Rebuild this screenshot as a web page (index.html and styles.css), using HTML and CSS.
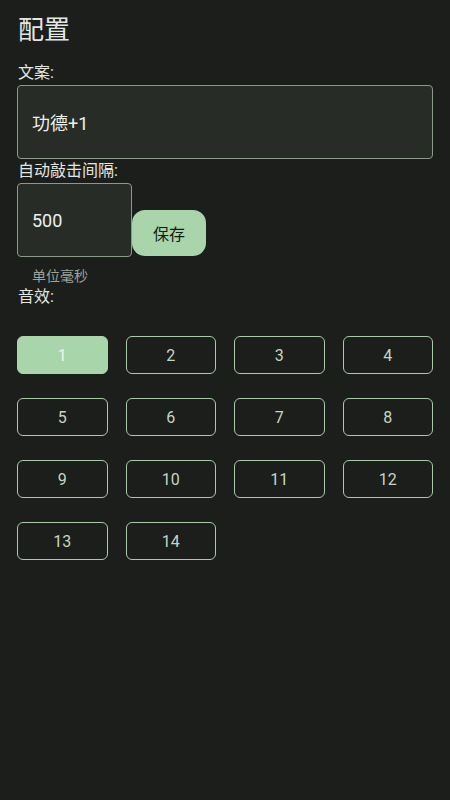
FILE: index.html
```html
<!DOCTYPE html>
<html lang="zh">
<head>
<meta charset="utf-8">
<link rel="stylesheet" href="styles.css">
</head>
<body>
<main class="page">
  <h1 class="title">配置</h1>
  <div class="label">文案:</div>
  <div class="field field-wide"><span class="field-text">功德+1</span></div>
  <div class="label">自动敲击间隔:</div>
  <div class="interval-row">
    <div class="field field-narrow"><span class="field-text">500</span></div>
    <button class="save-btn">保存</button>
  </div>
  <div class="hint">单位毫秒</div>
  <div class="label">音效:</div>
  <div class="sound-grid">
    <button class="sound-btn active">1</button>
    <button class="sound-btn">2</button>
    <button class="sound-btn">3</button>
    <button class="sound-btn">4</button>
    <button class="sound-btn">5</button>
    <button class="sound-btn">6</button>
    <button class="sound-btn">7</button>
    <button class="sound-btn">8</button>
    <button class="sound-btn">9</button>
    <button class="sound-btn">10</button>
    <button class="sound-btn">11</button>
    <button class="sound-btn">12</button>
    <button class="sound-btn">13</button>
    <button class="sound-btn">14</button>
  </div>
</main>
</body>
</html>
```

FILE: styles.css
```css
html, body {
  margin: 0;
  padding: 0;
  background: #1b1e1b;
}
body {
  width: 450px;
  height: 800px;
  font-family: Roboto, "Noto Sans CJK SC", sans-serif;
  color: #e3e6e1;
}
.page {
  display: flex;
  flex-direction: column;
  padding: 12px 17px 0 17px;
}
.title {
  margin: 0 0 13px 0;
  font-size: 26px;
  font-weight: 400;
  line-height: 36px;
  padding-left: 1px;
}
.label {
  font-size: 16px;
  line-height: 24px;
  padding-left: 1px;
  color: #e3e6e1;
}
.field {
  box-sizing: border-box;
  height: 74px;
  border: 1px solid #8c988a;
  border-radius: 4px;
  background: #282c27;
  display: flex;
  align-items: center;
  padding-left: 14px;
}
.field-wide {
  width: 416px;
}
.field-narrow {
  width: 115px;
}
.field-text {
  font-size: 18px;
  font-weight: 400;
  color: #eef1ec;
}
.interval-row {
  display: flex;
  align-items: flex-end;
}
.save-btn {
  width: 74px;
  height: 46px;
  margin-bottom: 1px;
  border: none;
  border-radius: 13px;
  background: #a8d5aa;
  color: #151a15;
  font-family: Roboto, "Noto Sans CJK SC", sans-serif;
  font-size: 16px;
  padding: 0;
}
.hint {
  margin-top: 10px;
  padding-left: 15px;
  font-size: 14px;
  line-height: 18px;
  color: #9da39b;
}
.sound-grid {
  margin-top: 27px;
  display: grid;
  grid-template-columns: repeat(4, 1fr);
  column-gap: 18px;
  row-gap: 24px;
}
.sound-btn {
  height: 38px;
  box-sizing: border-box;
  border: 1px solid #a9c9a8;
  border-radius: 6px;
  background: transparent;
  color: #c4d6c2;
  font-family: Roboto, "Noto Sans CJK SC", sans-serif;
  font-size: 16px;
  padding: 0;
}
.sound-btn.active {
  background: #a8d5aa;
  border-color: #a8d5aa;
  color: #eef5ec;
}
```
